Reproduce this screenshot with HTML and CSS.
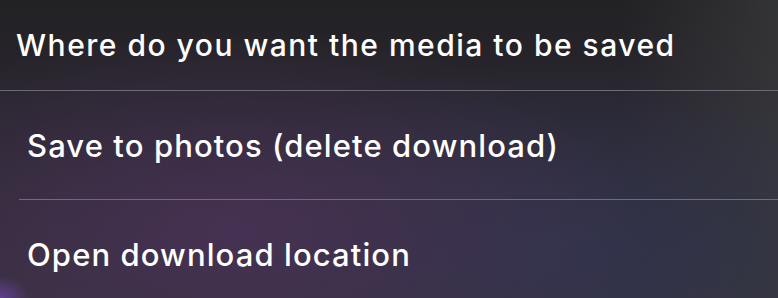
FILE: index.html
```html
<!DOCTYPE html>
<html lang="en">

<head>
    <meta charset="UTF-8">
    <meta name="viewport" content="width=device-width, initial-scale=1.0">
    <title>Save media</title>
    <link rel="stylesheet" href="styles.css">
</head>

<body>
    <div class="folha">
        <div class="titulo">Where do you want the media to be saved</div>
        <div class="opcoes">
            <div class="opcao">Save to photos (delete download)</div>
            <div class="opcao">Open download location</div>
        </div>
    </div>
</body>

</html>
```

FILE: styles.css
```css
html, body {
    margin: 0;
    padding: 0;
}

body {
    width: 778px;
    height: 298px;
    overflow: hidden;
    font-family: Inter, "Noto Sans", sans-serif;
    color: #ffffff;
}

.folha {
    height: 100%;
    background:
        radial-gradient(ellipse 30px 22px at 0 298px, rgba(100, 65, 150, 0.9), rgba(100, 65, 150, 0) 100%),
        radial-gradient(ellipse 420px 200px at 230px 230px, rgba(72, 50, 85, 0.9), rgba(72, 50, 85, 0) 100%),
        radial-gradient(ellipse 360px 190px at 560px 250px, rgba(48, 52, 78, 0.9), rgba(48, 52, 78, 0) 100%),
        linear-gradient(90deg, rgba(55, 56, 58, 0) 80%, rgba(55, 56, 58, 0.8) 100%),
        linear-gradient(180deg, #222124 0%, #2a2730 40%, #36303e 100%);
}

.titulo {
    height: 90px;
    display: flex;
    align-items: center;
    padding-left: 16px;
    font-size: 30px;
    font-weight: 500;
    letter-spacing: 1.5px;
    border-bottom: 1px solid #6f6b76;
}

.opcoes {
    padding-left: 19px;
}

.opcao {
    height: 108px;
    display: flex;
    align-items: center;
    padding-left: 8px;
    font-size: 31px;
    font-weight: 500;
    letter-spacing: 1.1px;
    border-bottom: 1px solid #6e6a80;
}

.opcao:last-child {
    border-bottom: none;
}
```
